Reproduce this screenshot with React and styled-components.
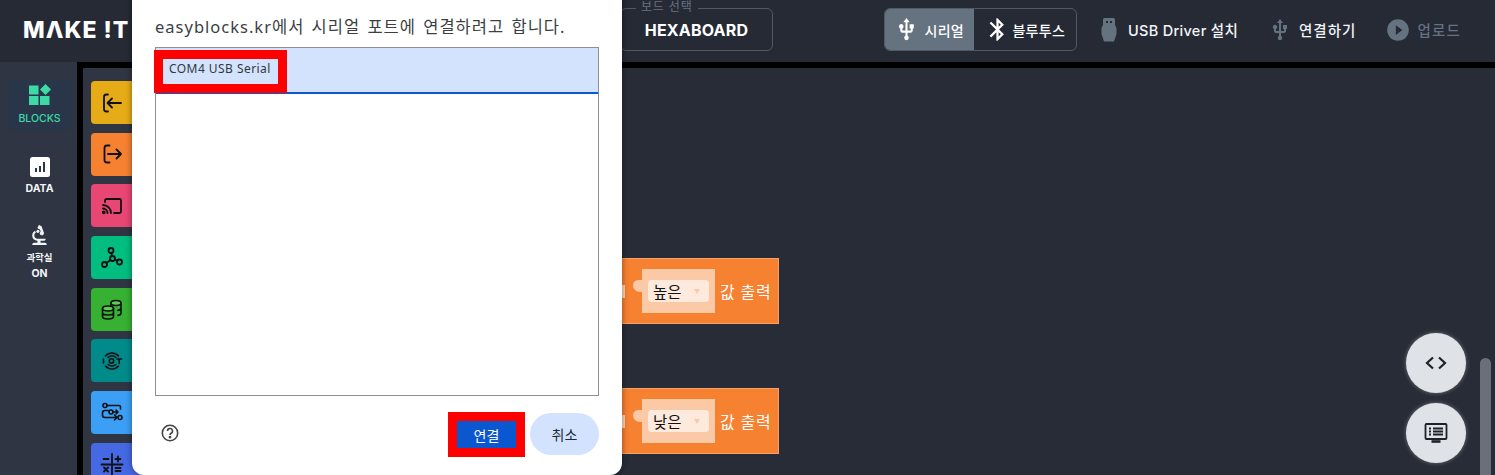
import React from "react";
import styled, { createGlobalStyle } from "styled-components";
import { MdUsb, MdBluetooth, MdPlayCircleFilled, MdBiotech } from "react-icons/md";

const uiFont = `"Inter", "Noto Sans CJK KR", sans-serif`;
const dialogFont = `"Noto Sans", "Noto Sans CJK KR", sans-serif`;

const GlobalStyle = createGlobalStyle`
	html, body {
		margin: 0;
		padding: 0;
		background: #282c37;
		overflow: hidden;
	}
	* {
		box-sizing: border-box;
	}
`;

const Page = styled.div`
	position: relative;
	width: 1495px;
	height: 475px;
	overflow: hidden;
	display: flex;
	flex-direction: column;
	font-family: ${uiFont};
	background: #000;
`;

const Header = styled.header`
	height: 62px;
	flex: none;
	display: flex;
	align-items: center;
	background: #262a35;
	padding: 0 0 3px 23px;
`;

const Logo = styled.div`
	width: 597px;
	font-size: 23px;
	font-weight: 800;
	letter-spacing: 1px;
	color: #fff;
`;

const BoardBox = styled.div`
	position: relative;
	width: 153px;
	height: 43px;
	margin-right: 111px;
	border: 1px solid #4f5a67;
	border-radius: 6px;
	display: flex;
	align-items: center;
	justify-content: center;
	font-size: 16px;
	font-weight: 700;
	letter-spacing: 0.2px;
	color: #fff;
`;

const BoardLegend = styled.span`
	position: absolute;
	left: 15px;
	top: -9px;
	padding: 0 5px;
	background: #262a35;
	font-size: 12px;
	font-weight: 400;
	line-height: 14px;
	letter-spacing: 0.8px;
	color: #69727f;
`;

const ConnectToggle = styled.div`
	width: 193px;
	height: 43px;
	display: flex;
	border: 1px solid #4f5a67;
	border-radius: 6px;
	overflow: hidden;
	margin-right: 24px;
`;

const ToggleItem = styled.div`
	width: ${p => (p.$active ? "89px" : "103px")};
	display: flex;
	align-items: center;
	justify-content: center;
	gap: ${p => (p.$active ? "5px" : "1px")};
	background: ${p => (p.$active ? "#65727f" : "transparent")};
	color: #fff;
	font-size: 14px;
	font-weight: 500;
	letter-spacing: 0.3px;
	white-space: nowrap;
`;

const HeaderAction = styled.div`
	display: flex;
	align-items: center;
	gap: ${p => p.$gap}px;
	margin-right: ${p => p.$right || 0}px;
	font-size: 14.5px;
	font-weight: 500;
	letter-spacing: ${p => p.$spacing || 0.3}px;
	white-space: nowrap;
	color: ${p => (p.$disabled ? "#65727f" : "#f2f4f6")};
`;

const Body = styled.div`
	flex: 1;
	display: flex;
	min-height: 0;
`;

const Sidebar = styled.nav`
	width: 77px;
	flex: none;
	background: #2f3542;
	padding: 17px 5px 0 7px;
	display: flex;
	flex-direction: column;
	align-items: center;
`;

const SideTab = styled.div`
	width: 65px;
	height: ${p => p.$height}px;
	margin-bottom: ${p => p.$gap || 0}px;
	padding-top: ${p => p.$pad || 0}px;
	display: flex;
	flex-direction: column;
	align-items: center;
	justify-content: ${p => (p.$active ? "center" : "flex-start")};
	border-radius: 9px;
	background: ${p => (p.$active ? "#293548" : "transparent")};
	color: ${p => (p.$active ? "#3ddaa6" : "#f2f4f6")};
	font-weight: ${p => (p.$active ? 500 : 700)};
`;

const SideLabel = styled.span`
	display: block;
	margin-top: ${p => p.$top || 0}px;
	font-size: ${p => p.$size || 10.5}px;
	line-height: ${p => p.$line || 14}px;
`;

const Canvas = styled.div`
	flex: 1;
	margin: 6px 0 0 6px;
	display: flex;
	min-width: 0;
`;

const Palette = styled.div`
	width: 100px;
	flex: none;
	background: #2f3542;
	padding: 13px 0 0 8px;
	display: flex;
	flex-direction: column;
	gap: 8.7px;
	overflow: hidden;
`;

const PaletteItem = styled.div`
	flex: none;
	width: 84px;
	height: 43px;
	border-radius: 4px;
	background: ${p => p.$color};
	padding-left: 9px;
	display: flex;
	align-items: center;
`;

const Workspace = styled.main`
	position: relative;
	flex: 1;
	background: #282c37;
`;

/* block canvas: blocks keep their own coordinates */
const Block = styled.div`
	position: absolute;
	left: 400px;
	top: ${p => p.$top}px;
	width: 196px;
	height: 66px;
	background: #f68130;
	border: 1px solid #f9a06a;
	border-left: 0;
	display: flex;
	align-items: center;
	padding-left: 59px;
	color: #fff;
	font-family: ${dialogFont};
	font-size: 16px;
	letter-spacing: 0.8px;
	white-space: nowrap;
`;

const BlockTick = styled.span`
	position: absolute;
	left: 38px;
	top: 26px;
	width: 4px;
	height: 13px;
	background: #fdd5b8;
`;

const ValueSlot = styled.div`
	position: relative;
	width: 73px;
	height: 44px;
	margin-right: 5px;
	background: #fbc9a5;
	display: flex;
	align-items: center;
	padding-left: 6px;
	&::before {
		content: "";
		position: absolute;
		left: -9px;
		top: 11px;
		width: 10px;
		height: 12px;
		background: #fbc9a5;
		border-radius: 6px 0 0 8px;
	}
`;

const ValueSelect = styled.div`
	width: 61px;
	height: 22px;
	border-radius: 4px;
	background: #fdeadd;
	color: #111;
	display: flex;
	align-items: center;
	justify-content: space-between;
	padding: 0 9px 0 5px;
	font-size: 15.500px;
	letter-spacing: 0;
`;

const SelectCaret = styled.span`
	width: 0;
	height: 0;
	border-left: 3.5px solid transparent;
	border-right: 3.5px solid transparent;
	border-top: 5px solid #fbc9a5;
`;

const Fab = styled.button`
	position: absolute;
	left: 1406px;
	top: ${p => p.$top}px;
	width: 60px;
	height: 60px;
	padding: 0;
	border: 0;
	border-radius: 50%;
	background: #dfe2e7;
	box-shadow: 0 0 4px rgba(255, 255, 255, 0.35);
	display: flex;
	align-items: center;
	justify-content: center;
`;

const ScrollThumb = styled.div`
	position: absolute;
	left: 1480px;
	top: 358px;
	width: 11px;
	height: 130px;
	border-radius: 6px;
	background: #6b6f7a;
`;

const Dialog = styled.section`
	position: absolute;
	left: 132px;
	top: -20px;
	width: 490px;
	height: 495px;
	padding: 35px 23px 0;
	background: #fff;
	border-radius: 0 0 12px 12px;
	box-shadow: 0 0 6px rgba(0, 0, 0, 0.45);
	font-family: ${dialogFont};
	display: flex;
	flex-direction: column;
`;

const DialogTitle = styled.h1`
	margin: 0 0 8px;
	font-size: 16.500px;
	font-weight: 400;
	line-height: 24px;
	letter-spacing: 1px;
	word-spacing: 2px;
	color: #3c3f43;
	white-space: nowrap;
`;

const PortList = styled.div`
	width: 444px;
	height: 349px;
	border: 1px solid #8f8f8f;
`;

const PortRow = styled.div`
	position: relative;
	height: 46px;
	background: #d3e3fd;
	border-bottom: 2px solid #0b57d0;
	padding: 12px 0 0 13px;
	font-size: 12px;
	line-height: 18px;
	letter-spacing: 0.45px;
	color: #33373c;
`;

const RedMark = styled.span`
	position: absolute;
	left: -2px;
	top: 2px;
	width: 133px;
	height: 43px;
	border: 9px solid #ff0000;
`;

const DialogFooter = styled.div`
	margin-top: 16px;
	display: flex;
	align-items: flex-start;
	padding-left: 6px;
`;

const HelpIcon = styled.div`
	margin-top: 12px;
	margin-right: 269px;
	width: 18px;
	height: 18px;
`;

const ConnectButton = styled.button`
	width: 77px;
	height: 45px;
	margin-right: 5px;
	border: 9px solid #ff0000;
	padding: 0;
	background: #0b57d0;
	color: #fff;
	font-family: ${dialogFont};
	font-size: 14px;
`;

const CancelButton = styled.button`
	width: 69px;
	height: 42px;
	margin-top: 1px;
	border: 0;
	border-radius: 21px;
	padding: 0;
	background: #d3e3fd;
	color: #1f2a37;
	font-family: ${dialogFont};
	font-size: 14px;
`;

const Glyph = ({ size = 24, children, ...rest }) => (
	<svg width={size} height={size} viewBox="0 0 24 24" fill="none" stroke="#111" strokeWidth="1.8" strokeLinecap="round" strokeLinejoin="round" {...rest}>
		{children}
	</svg>
);

const paletteItems = [
	{
		color: "#e6ac17",
		icon: (
			<Glyph>
				<path d="M8 3.5H6.5A2.5 2.5 0 0 0 4 6v12a2.5 2.5 0 0 0 2.5 2.5H8" />
				<path d="M21 12H8M12 7.5 7.5 12l4.5 4.5" />
			</Glyph>
		)
	},
	{
		color: "#f68130",
		icon: (
			<Glyph>
				<path d="M9.5 3.5H7A2.5 2.5 0 0 0 4.500 6v12A2.500 2.500 0 0 0 7 20.500h2.500" />
				<path d="M8 12h13M16.500 7.500 21 12l-4.500 4.500" />
			</Glyph>
		)
	},
	{
		color: "#e84673",
		icon: (
			<Glyph>
				<path d="M5 8V6.500A1.500 1.500 0 0 1 6.500 5h13A1.500 1.500 0 0 1 21 6.500v11a1.500 1.500 0 0 1-1.500 1.500H14" />
				<path d="M3 11a8 8 0 0 1 8 8M3 14.500A4.500 4.500 0 0 1 7.500 19" />
				<circle cx="3.800" cy="18.300" r="1" fill="#111" />
			</Glyph>
		)
	},
	{
		color: "#02bd80",
		icon: (
			<Glyph>
				<circle cx="11" cy="4.500" r="2.500" />
				<circle cx="12.500" cy="12.500" r="2.500" />
				<circle cx="4.500" cy="18.500" r="2.500" />
				<circle cx="19.500" cy="16" r="2.500" />
				<path d="m11.500 7 .5 3M10.500 14 6.500 17M15 13.700l2.300 1.200" />
			</Glyph>
		)
	},
	{
		color: "#36b132",
		icon: (
			<Glyph strokeWidth="1.600">
				<ellipse cx="16" cy="6" rx="5" ry="2.500" fill="#5fcf52" />
				<path d="M21 6v10c0 1.300-1.500 2.200-3 2.400M21 11c0 1.300-1.500 2.200-3 2.400M11 6v3" />
				<ellipse cx="8" cy="11.500" rx="5.500" ry="2.500" fill="#5fcf52" />
				<path d="M2.500 11.500v8c0 1.400 2.500 2.500 5.500 2.500s5.500-1.100 5.500-2.500v-8M2.500 15.500c0 1.400 2.500 2.500 5.500 2.500s5.500-1.100 5.500-2.500" />
			</Glyph>
		)
	},
	{
		color: "#008a8a",
		icon: (
			<Glyph strokeWidth="1.600">
				<path d="M5.500 7C9 3 15 3 18.500 7M8 8.500c2.500-2 5.500-2 8 0M5.500 17c3.500 4 9.500 4 13 0M8 15.500c2.500 2 5.500 2 8 0" />
				<path d="M3.500 10v4" />
				<circle cx="11.500" cy="12" r="2.200" />
				<path d="M17 10h4.500M19.200 10v4.500" />
			</Glyph>
		)
	},
	{
		color: "#3b9ff5",
		icon: (
			<Glyph strokeWidth="1.600">
				<circle cx="5" cy="4.500" r="2" />
				<path d="M7 4.500h12A1.500 1.500 0 0 1 20.500 6v2" />
				<path d="M8 9.500H5A2.500 2.500 0 0 0 2.500 12v2A2.500 2.500 0 0 0 5 16.500h12M14.500 14l2.500 2.500-2.500 2.500" />
				<circle cx="11" cy="11" r="2" />
				<path d="M13 11h5M16 9l2 2-2 2" />
				<circle cx="20" cy="16.500" r="2" />
			</Glyph>
		)
	},
	{
		color: "#4568e3",
		icon: (
			<Glyph>
				<path d="M12 2v21M1.500 12.500h21M3.500 7h5M15.500 7h5M18 4.500v5M15.500 16h5M15.500 19h5M4 15.500l4 4M8 15.500l-4 4" />
			</Glyph>
		)
	}
];

const App = () => (
	<Page>
		<GlobalStyle />
		<Header>
			<Logo>MΛKE !T</Logo>
			<BoardBox>
				<BoardLegend>보드 선택</BoardLegend>
				HEXABOARD
			</BoardBox>
			<ConnectToggle>
				<ToggleItem $active>
					<MdUsb size={25} color="#fff" />
					시리얼
				</ToggleItem>
				<ToggleItem>
					<MdBluetooth size={27} color="#fff" />
					블루투스
				</ToggleItem>
			</ConnectToggle>
			<HeaderAction $right={30} $gap={11}>
				<svg width="16" height="24" viewBox="0 0 16 24">
					<path d="M2 1.500A1.500 1.500 0 0 1 3.500 0h9A1.500 1.500 0 0 1 14 1.500V7l1.500 3v6L13 23.500H3L.5 16v-6L2 7z" fill="#65727f" />
					<path d="M5 3h2v2H5zM9 3h2v2H9z" fill="#262a35" />
				</svg>
				USB Driver 설치
			</HeaderAction>
			<HeaderAction $right={29} $gap={7} $spacing={1}>
				<MdUsb size={24} color="#65727f" />
				연결하기
			</HeaderAction>
			<HeaderAction $disabled $gap={6} $spacing={1.2}>
				<MdPlayCircleFilled size={26} color="#65727f" />
				업로드
			</HeaderAction>
		</Header>
		<Body>
			<Sidebar>
				<SideTab $active $height={52} $gap={25}>
					<svg width="24" height="22" viewBox="0 0 24 22" fill="#3ddaa6">
						<rect x="1" y="1.500" width="9.500" height="9" />
						<rect x="1" y="12" width="9.500" height="9" />
						<rect x="12" y="12" width="9.500" height="9" />
						<path d="m17.500 0 5.500 5.500-5.500 5.500L12 5.500z" />
					</svg>
					<SideLabel $top={6}>BLOCKS</SideLabel>
				</SideTab>
				<SideTab $height={67} $pad={1}>
					<svg width="20" height="20" viewBox="0 0 20 20">
						<rect width="20" height="20" rx="2.500" fill="#fff" />
						<path d="M5 11h2v4H5zM9 9h2v6H9zM13 5h2v10h-2z" fill="#2f3542" />
					</svg>
					<SideLabel $top={5}>DATA</SideLabel>
				</SideTab>
				<SideTab $height={60}>
					<MdBiotech size={25} color="#f2f4f6" />
					<SideLabel $top={3} $size={9.500} $line={13}>과학실</SideLabel>
					<SideLabel $top={3}>ON</SideLabel>
				</SideTab>
			</Sidebar>
			<Canvas>
				<Palette>
					{paletteItems.map(item => (
						<PaletteItem key={item.color} $color={item.color}>
							{item.icon}
						</PaletteItem>
					))}
				</Palette>
				<Workspace>
					<Block $top={190}>
						<BlockTick />
						<ValueSlot>
							<ValueSelect>
								높은
								<SelectCaret />
							</ValueSelect>
						</ValueSlot>
						값 출력
					</Block>
					<Block $top={320}>
						<BlockTick />
						<ValueSlot>
							<ValueSelect>
								낮은
								<SelectCaret />
							</ValueSelect>
						</ValueSlot>
						값 출력
					</Block>
				</Workspace>
			</Canvas>
		</Body>
		<Fab $top={333}>
			<svg width="24" height="24" viewBox="0 0 24 24" fill="none" stroke="#1d2128" strokeWidth="2.200">
				<path d="m9 6.500-6 5.500 6 5.500M15 6.500l6 5.500-6 5.500" />
			</svg>
		</Fab>
		<Fab $top={403}>
			<svg width="24" height="24" viewBox="0 0 24 24" fill="none" stroke="#1d2128" strokeWidth="1.800">
				<rect x="1.500" y="3" width="21" height="15" rx="1" />
				<path d="M9 7.500h10M9 10.500h10M9 13.500h10M5 7.500h2M5 10.500h2M5 13.500h2" />
				<path d="M7.500 20.500h9" strokeWidth="2.600" />
			</svg>
		</Fab>
		<ScrollThumb />
		<Dialog>
			<DialogTitle>easyblocks.kr에서 시리얼 포트에 연결하려고 합니다.</DialogTitle>
			<PortList>
				<PortRow>
					COM4 USB Serial
					<RedMark />
				</PortRow>
			</PortList>
			<DialogFooter>
				<HelpIcon>
					<svg width="18" height="18" viewBox="0 0 18 18" fill="none" stroke="#444" strokeWidth="1.600">
						<circle cx="9" cy="9" r="7.700" />
						<path d="M6.500 7a2.500 2.500 0 1 1 3.700 2.200c-.8.500-1.200.9-1.200 1.800" />
						<circle cx="9" cy="13.200" r=".6" fill="#444" />
					</svg>
				</HelpIcon>
				<ConnectButton>연결</ConnectButton>
				<CancelButton>취소</CancelButton>
			</DialogFooter>
		</Dialog>
	</Page>
);

export default App;
